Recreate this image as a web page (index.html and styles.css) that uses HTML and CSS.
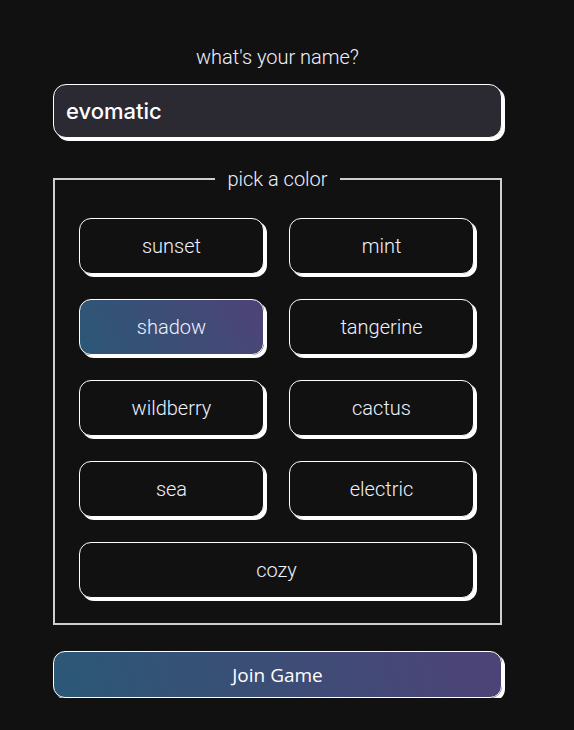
FILE: index.html
```html
<!DOCTYPE html>
<html>
<head>
<meta charset="utf-8">
<link rel="stylesheet" href="styles.css">
</head>
<body>
<main class="form">
  <label class="name-label" for="name">what's your name?</label>
  <input class="name-input" id="name" type="text" value="evomatic">
  <fieldset class="colors">
    <legend class="colors-legend">pick a color</legend>
    <div class="color-grid">
      <button class="color-btn">sunset</button>
      <button class="color-btn">mint</button>
      <button class="color-btn selected">shadow</button>
      <button class="color-btn">tangerine</button>
      <button class="color-btn">wildberry</button>
      <button class="color-btn">cactus</button>
      <button class="color-btn">sea</button>
      <button class="color-btn">electric</button>
      <button class="color-btn wide">cozy</button>
    </div>
  </fieldset>
  <button class="join-btn">Join Game</button>
</main>
</body>
</html>
```
FILE: styles.css
```css
html, body {
  margin: 0;
  background: #111111;
}
body {
  font-family: Roboto, "DejaVu Sans", sans-serif;
  color: #eef2ff;
}
.form {
  width: 449px;
  margin-left: 53px;
  padding-top: 44px;
  display: flex;
  flex-direction: column;
}
.name-label {
  text-align: center;
  font-size: 20px;
  font-weight: 300;
  line-height: 26px;
  margin-bottom: 14px;
}
.name-input {
  box-sizing: border-box;
  height: 54px;
  width: 449px;
  margin: 0;
  border: 1px solid #ffffff;
  border-radius: 13px;
  box-shadow: 3px 3px 0 #ffffff;
  background: #2b2a33;
  color: #ffffff;
  font-family: Inter, "Open Sans", sans-serif;
  font-weight: 500;
  font-size: 22px;
  padding: 0 12px;
  outline: none;
}
.colors {
  margin: 29px 0 0 0;
  padding: 27px 24px 25px 24px;
  border: 2px solid #cfcfcf;
  min-width: 0;
}
.colors-legend {
  margin: 0 auto;
  padding: 0 12px;
  font-size: 20px;
  font-weight: 300;
  line-height: 24px;
  color: #eef2ff;
}
.color-grid {
  display: grid;
  grid-template-columns: 185px 185px;
  gap: 25px;
}
.color-btn {
  box-sizing: border-box;
  height: 56px;
  margin: 0;
  border: 1px solid #ffffff;
  border-radius: 12px;
  box-shadow: 3px 3px 0 #ffffff;
  background: #111111;
  color: #eef2ff;
  font-family: Roboto, sans-serif;
  font-weight: 300;
  font-size: 20px;
  cursor: pointer;
}
.color-btn.selected {
  background: linear-gradient(60deg, #2b5876, #4e4376);
}
.color-btn.wide {
  grid-column: 1 / span 2;
}
.join-btn {
  box-sizing: border-box;
  margin-top: 26px;
  height: 47px;
  width: 449px;
  border: 1px solid #ffffff;
  border-radius: 12px;
  box-shadow: 3px 3px 0 #ffffff;
  background: linear-gradient(75deg, #2b5876, #4e4376);
  color: #ffffff;
  font-family: "Open Sans", sans-serif;
  font-size: 19px;
}
```
